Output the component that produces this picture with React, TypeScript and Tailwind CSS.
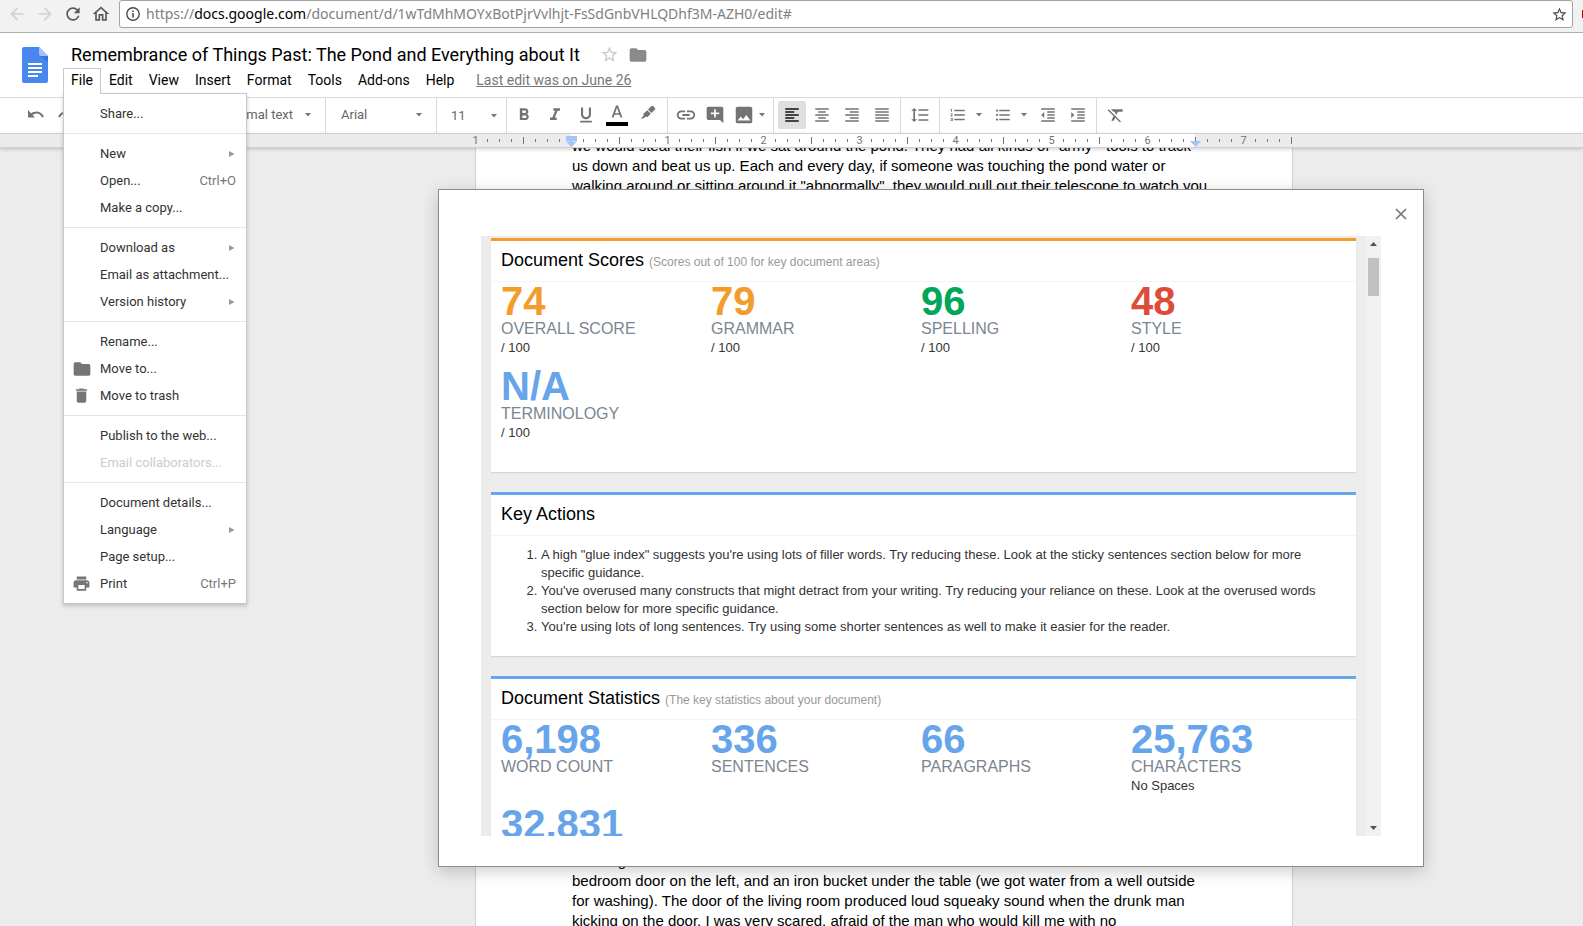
import type { ReactNode } from "react";
import {
  MdAddComment,
  MdArrowBack,
  MdArrowForward,
  MdDelete,
  MdFolder,
  MdFormatAlignCenter,
  MdFormatAlignJustify,
  MdFormatAlignLeft,
  MdFormatAlignRight,
  MdFormatBold,
  MdFormatClear,
  MdFormatIndentDecrease,
  MdFormatIndentIncrease,
  MdFormatItalic,
  MdFormatLineSpacing,
  MdFormatListBulleted,
  MdFormatListNumbered,
  MdFormatUnderlined,
  MdImage,
  MdLink,
  MdOutlineHome,
  MdPrint,
  MdRefresh,
  MdStarBorder,
} from "react-icons/md";

function BrowserBar() {
  return (
    <div className="flex h-[33px] shrink-0 items-start border-b border-[#b0b0b0] bg-[#f2f2f2]">
      <div className="flex h-7 w-[119px] shrink-0 items-center gap-2 pl-[7px] text-[#5a5a5a]">
        <button aria-label="Back" className="text-[#d2d2d2]"><MdArrowBack size={20} /></button>
        <button aria-label="Forward" className="text-[#d2d2d2]"><MdArrowForward size={20} /></button>
        <button aria-label="Reload"><MdRefresh size={20} /></button>
        <button aria-label="Home"><MdOutlineHome size={20} /></button>
      </div>
      <div className="flex h-7 min-w-0 flex-1 items-center rounded-[3px] border border-[#a3a3a3] bg-white pr-1 pl-[6px] font-['Noto_Sans',sans-serif] text-sm leading-5 whitespace-nowrap text-[#808080]">
        <svg width="14" height="14" viewBox="0 0 14 14" className="mr-[6px] shrink-0" fill="none" stroke="#4a4a4a" strokeWidth="1.4">
          <circle cx="7" cy="7" r="6.2" />
          <path d="M7 6v4.4M7 3.4v1.5" strokeWidth="1.6" />
        </svg>
        <span className="flex-1">
          https://<span className="text-black">docs.google.com</span>/document/d/1wTdMhMOYxBotPjrVvlhjt-FsSdGnbVHLQDhf3M-AZH0/edit#
        </span>
        <button aria-label="Bookmark this page" className="text-[#4a4a4a]"><MdStarBorder size={17} /></button>
      </div>
      <div className="flex h-7 w-[10px] shrink-0 items-center justify-end">
        <span className="h-2 w-px bg-[#cc0000]" />
      </div>
    </div>
  );
}

type Item = { label: string; hint?: string; sub?: boolean; off?: boolean; icon?: ReactNode };

const fileMenu: Item[][] = [
  [{ label: "Share..." }],
  [{ label: "New", sub: true }, { label: "Open...", hint: "Ctrl+O" }, { label: "Make a copy..." }],
  [{ label: "Download as", sub: true }, { label: "Email as attachment..." }, { label: "Version history", sub: true }],
  [
    { label: "Rename..." },
    { label: "Move to...", icon: <MdFolder size={20} /> },
    { label: "Move to trash", icon: <MdDelete size={19} /> },
  ],
  [{ label: "Publish to the web..." }, { label: "Email collaborators...", off: true }],
  [
    { label: "Document details..." },
    { label: "Language", sub: true },
    { label: "Page setup..." },
    { label: "Print", hint: "Ctrl+P", icon: <MdPrint size={19} /> },
  ],
];

function FileMenu() {
  return (
    <div role="menu" className="absolute top-6 -left-px w-[184px] border border-[#c6c8ca] bg-white text-[13px] leading-[27px] text-[#333] shadow-[0_2px_4px_rgba(0,0,0,0.2)]">
      {fileMenu.map((group, i) => (
        <div key={i} className={i ? "border-t border-[#e5e5e5] py-[6px]" : "py-[6px]"}>
          {group.map((item) => (
            <button
              key={item.label}
              role="menuitem"
              disabled={item.off}
              className={"flex h-[27px] w-full items-center pr-[10px] text-left whitespace-nowrap " + (item.off ? "text-[#ccc]" : "")}
            >
              <span className="flex w-9 shrink-0 justify-center pr-px text-[#757575]">{item.icon}</span>
              <span className="flex-1">{item.label}</span>
              {item.hint && <span className="text-[#777]">{item.hint}</span>}
              {item.sub && (
                <svg width="8" height="6" viewBox="0 0 8 6" fill="#999"><path d="M1 0l5.500 3L1 6z" /></svg>
              )}
            </button>
          ))}
        </div>
      ))}
    </div>
  );
}

function Header() {
  return (
    <header className="flex h-16 shrink-0 bg-white">
      <svg width="26" height="36" viewBox="0 0 26 36" className="mt-[14px] mr-[15px] ml-[22px] shrink-0">
        <path d="M2 0h15l9 9v25a2 2 0 0 1-2 2H2a2 2 0 0 1-2-2V2a2 2 0 0 1 2-2z" fill="#4a86f0" />
        <path d="M18 9.500L26 15V9z" fill="#3b71d4" />
        <path d="M17 0l9 9h-7a2 2 0 0 1-2-2z" fill="#a4c2f9" />
        <path d="M6 16h14v2H6zM6 20h14v2H6zM6 24h14v2H6zM6 28h10v2H6z" fill="#fff" />
      </svg>
      <div>
        <div className="flex h-[35px] items-center pt-2 pl-2">
          <h1 className="text-lg leading-6 whitespace-nowrap">Remembrance of Things Past: The Pond and Everything about It</h1>
          <button aria-label="Star" className="ml-5 text-[#c8c8c8]"><MdStarBorder size={19} /></button>
          <button aria-label="Move to folder" className="ml-[9px] text-[#8a8a8a]"><MdFolder size={20} /></button>
        </div>
        <nav className="flex h-[26px] text-sm leading-[22px] whitespace-nowrap">
          <div className="relative z-30 border border-b-0 border-[#c6c8ca] bg-white">
            <FileMenu />
            <button className="relative z-10 h-[25px] bg-white px-[7px] pb-[3px]">File</button>
          </div>
          {["Edit", "View", "Insert", "Format", "Tools", "Add-ons", "Help"].map((name) => (
            <button key={name} className="flex h-6 items-center px-2">{name}</button>
          ))}
          <a href="#history" className="ml-[14px] flex h-6 items-center text-[#777] underline">Last edit was on June 26</a>
        </nav>
      </div>
    </header>
  );
}

function Tool({ label, active, children }: { label: string; active?: boolean; children: ReactNode }) {
  return (
    <button aria-label={label} title={label} className={"flex h-7 w-7 shrink-0 items-center justify-center rounded-[2px] " + (active ? "bg-[#dfdfdf] text-[#111]" : "")}>
      {children}
    </button>
  );
}

function Caret() {
  return <svg width="6" height="4" viewBox="0 0 6 4" fill="#777" className="shrink-0"><path d="M0 0h6L3 3.5z" /></svg>;
}

function Toolbar() {
  return (
    <div className="flex h-[37px] shrink-0 items-stretch border-y border-[#d9d9d9] bg-white text-[13px] text-[#666]">
      <div className="flex w-[326px] items-center border-r border-[#d9d9d9] pr-[14px] pb-px pl-[27px]">
        <button aria-label="Undo">
          <svg width="18" height="10" viewBox="0 0 18 10" fill="none" stroke="#737373" strokeWidth="2.2"><path d="M3 5.5C7 1.500 13 1 16 7" /><path d="M1 0v7.500h7z" fill="#737373" stroke="none" /></svg>
        </button>
        <button aria-label="Redo" className="ml-[12px]">
          <svg width="18" height="10" viewBox="0 0 18 10" fill="none" stroke="#737373" strokeWidth="2.200"><path d="M15 5.500C11 1.500 5 1 2 7" /><path d="M17 0v7.500h-7z" fill="#737373" stroke="none" /></svg>
        </button>
        <button className="ml-auto flex items-center gap-3 whitespace-nowrap">Normal text <Caret /></button>
      </div>
      <button className="flex w-[111px] items-center justify-between border-r border-[#d9d9d9] pr-[14px] pb-px pl-[15px]">Arial <Caret /></button>
      <button className="flex w-[70px] items-center justify-between border-r border-[#d9d9d9] pr-[9px] pl-[14px]">11 <Caret /></button>
      <div className="flex w-[161px] items-center gap-[3px] border-r border-[#d9d9d9] pb-px pl-[3px] text-[#737373]">
        <Tool label="Bold"><MdFormatBold size={20} /></Tool>
        <Tool label="Italic"><MdFormatItalic size={20} /></Tool>
        <Tool label="Underline"><MdFormatUnderlined size={20} /></Tool>
        <Tool label="Text color">
          <svg width="22" height="22" viewBox="0 0 22 22">
            <path d="M10 1.500L5.600 13.500h1.900l1-2.700h5l1 2.700h1.900L12 1.500zM9.100 9.200L11 3.800l1.900 5.400z" fill="#737373" />
            <path d="M0 18h22v4H0z" fill="#000" />
          </svg>
        </Tool>
        <Tool label="Highlight color">
          <svg width="16" height="16" viewBox="0 0 16 16" fill="#737373" className="mb-1">
            <path d="M11.200 1.200a1.500 1.500 0 0 1 2.100 0l1.500 1.500a1.500 1.500 0 0 1 0 2.100L11.500 8 8 4.500zM7.300 5.200l3.500 3.500-3.300 3.300-2.200-.3L3.500 13.500H.8l2.700-2.700-.1-2.100z" />
          </svg>
        </Tool>
      </div>
      <div className="flex w-[106px] items-center gap-px border-r border-[#d9d9d9] pb-px pl-1 text-[#737373]">
        <Tool label="Insert link"><MdLink size={22} /></Tool>
        <Tool label="Add comment"><MdAddComment size={20} /></Tool>
        <Tool label="Insert image"><MdImage size={22} /></Tool>
        <Caret />
      </div>
      <div className="flex w-[127px] items-center gap-[2px] border-r border-[#d9d9d9] pb-px pl-1 text-[#737373]">
        <Tool label="Left align" active><MdFormatAlignLeft size={18} /></Tool>
        <Tool label="Center align"><MdFormatAlignCenter size={18} /></Tool>
        <Tool label="Right align"><MdFormatAlignRight size={18} /></Tool>
        <Tool label="Justify"><MdFormatAlignJustify size={18} /></Tool>
      </div>
      <div className="flex w-[39px] items-center border-r border-[#d9d9d9] pb-px pl-[5px] text-[#737373]">
        <Tool label="Line spacing"><MdFormatLineSpacing size={20} /></Tool>
      </div>
      <div className="flex w-[157px] items-center gap-[2px] border-r border-[#d9d9d9] pb-px pl-1 text-[#737373]">
        <Tool label="Numbered list"><MdFormatListNumbered size={18} /></Tool>
        <span className="flex w-[13px] pl-[2px]"><Caret /></span>
        <Tool label="Bulleted list"><MdFormatListBulleted size={18} /></Tool>
        <span className="flex w-[13px] pl-[2px]"><Caret /></span>
        <Tool label="Decrease indent"><MdFormatIndentDecrease size={18} /></Tool>
        <Tool label="Increase indent"><MdFormatIndentIncrease size={18} /></Tool>
      </div>
      <div className="flex items-center pb-px pl-[5px] text-[#737373]">
        <Tool label="Clear formatting"><MdFormatClear size={20} /></Tool>
      </div>
    </div>
  );
}

function Ruler() {
  return (
    <div className="relative z-10 flex h-[14px] shrink-0 border-b border-[#d0d0d0] bg-[#ebebeb] pl-[475px] shadow-[0_1px_4px_rgba(0,0,0,0.2)]">
      <div className="relative flex gap-[11px]">
        <div className="absolute inset-y-0 left-24 w-[624px] bg-white" />
        {Array.from({ length: 69 }, (_, i) => {
          const inch = i / 8 - 1;
          const numbered = i % 8 === 0 && inch !== 0 && i < 68;
          return (
            <div key={i} className="relative flex h-[13px] w-px items-center justify-center">
              {numbered ? (
                <span className="shrink-0 text-[11px] leading-[13px] text-[#757575]">{Math.abs(inch)}</span>
              ) : (
                <span className={i % 4 === 0 ? "h-[7px] w-px bg-[#757575]" : "h-[3px] w-px bg-[#757575]"} />
              )}
            </div>
          );
        })}
        <svg width="12" height="12" viewBox="0 0 12 12" fill="#a3c4f7" className="absolute top-[2px] left-[91px]"><path d="M0 0h11v5H0zM0 5.500h11L5.500 11z" /></svg>
        <svg width="12" height="6" viewBox="0 0 12 6" fill="#a3c4f7" className="absolute top-[7px] left-[715px]"><path d="M0 0h11L5.500 6z" /></svg>
      </div>
    </div>
  );
}

type Stat = { value: string; label: string; note?: string; tone: string };

const scores: Stat[] = [
  { value: "74", label: "OVERALL SCORE", note: "/ 100", tone: "text-[#f39c2b]" },
  { value: "79", label: "GRAMMAR", note: "/ 100", tone: "text-[#f39c2b]" },
  { value: "96", label: "SPELLING", note: "/ 100", tone: "text-[#00a65a]" },
  { value: "48", label: "STYLE", note: "/ 100", tone: "text-[#dd4b39]" },
  { value: "N/A", label: "TERMINOLOGY", note: "/ 100", tone: "text-[#67a5ea]" },
];

const statistics: Stat[] = [
  { value: "6,198", label: "WORD COUNT", tone: "text-[#67a5ea]" },
  { value: "336", label: "SENTENCES", tone: "text-[#67a5ea]" },
  { value: "66", label: "PARAGRAPHS", tone: "text-[#67a5ea]" },
  { value: "25,763", label: "CHARACTERS", note: "No Spaces", tone: "text-[#67a5ea]" },
  { value: "32,831", label: "CHARACTERS", note: "With Spaces", tone: "text-[#67a5ea]" },
];

function Stats({ items }: { items: Stat[] }) {
  return (
    <div className="grid grid-cols-4 pt-[3px] pr-[15px] pb-[17px] pl-[10px]">
      {items.map((s) => (
        <div key={s.value} className="h-[85px]">
          <div className={"text-[40px] leading-8 font-bold " + s.tone}>{s.value}</div>
          <div className="text-base leading-6 text-[#7b8691]">{s.label}</div>
          <div className="text-[13px] leading-[14px]">{s.note}</div>
        </div>
      ))}
    </div>
  );
}

function Card({ title, note, accent, children }: { title: string; note?: string; accent: string; children: ReactNode }) {
  return (
    <section className={"mb-5 border-t-[3px] bg-white shadow-[0_1px_1px_rgba(0,0,0,0.1)] " + accent}>
      <header className="flex h-[41px] items-baseline gap-[5px] border-b border-[#f4f4f4] px-[10px] pt-[7px]">
        <h2 className="text-lg leading-6 text-black">{title}</h2>
        {note && <small className="text-[12px] leading-4 text-[#999]">{note}</small>}
      </header>
      {children}
    </section>
  );
}

function ReportDialog() {
  return (
    <div className="pointer-events-none absolute inset-0 z-20 flex items-start pt-[41px] pl-[438px]">
      <div role="dialog" aria-label="Document report" className="pointer-events-auto relative w-[986px] border border-[#8c8c8c] bg-white px-[42px] pt-[46px] pb-[30px] shadow-[0_4px_16px_rgba(0,0,0,0.2)]">
        <button aria-label="Close" className="absolute top-[18px] right-4">
          <svg width="12" height="12" viewBox="0 0 12 12" stroke="#777" strokeWidth="1.700"><path d="M1 1l10 10M11 1L1 11" /></svg>
        </button>
        <div className="flex h-[600px] overflow-hidden bg-[#ececec] font-['Liberation_Sans',Arial,sans-serif] text-[#333]">
          <div className="min-w-0 flex-1 px-[10px] pt-[2px]">
            <Card title="Document Scores" note="(Scores out of 100 for key document areas)" accent="border-t-[#f39c2b]">
              <Stats items={scores} />
            </Card>
            <Card title="Key Actions" accent="border-t-[#67a5ea]">
              <ol className="list-decimal pt-[10px] pr-[10px] pb-5 pl-[50px] text-[13px] leading-[18px]">
                <li>A high "glue index" suggests you're using lots of filler words. Try reducing these. Look at the sticky sentences section below for more specific guidance.</li>
                <li>You've overused many constructs that might detract from your writing. Try reducing your reliance on these. Look at the overused words section below for more specific guidance.</li>
                <li>You're using lots of long sentences. Try using some shorter sentences as well to make it easier for the reader.</li>
              </ol>
            </Card>
            <Card title="Document Statistics" note="(The key statistics about your document)" accent="border-t-[#67a5ea]">
              <Stats items={statistics} />
            </Card>
          </div>
          <div className="flex w-[15px] shrink-0 flex-col items-center bg-[#f1f1f1] py-[6px]">
            <svg width="7" height="4" viewBox="0 0 7 4" fill="#505050"><path d="M0 4h7L3.500 0z" /></svg>
            <div className="mt-3 h-[38px] w-[11px] bg-[#c1c1c1]" />
            <svg width="7" height="4" viewBox="0 0 7 4" fill="#505050" className="mt-auto"><path d="M0 0h7L3.500 4z" /></svg>
          </div>
        </div>
      </div>
    </div>
  );
}

function DocumentArea() {
  return (
    <main className="relative flex-1 overflow-hidden bg-[#ececec] pl-[475px]">
      <article className="flex h-full w-[818px] flex-col justify-between border-x border-[#d0d0d0] bg-white px-24 font-['Liberation_Sans',Arial,sans-serif] text-[15px] leading-5 whitespace-nowrap text-black">
        <p className="-mt-3">
          we would steal their fish if we sat around the pond. They had all kinds of "army"&nbsp; tools to track<br />
          us down and beat us up. Each and every day, if someone was touching the pond water or<br />
          walking around or sitting around it "abnormally", they would pull out their telescope to watch you
        </p>
        <p className="-mb-[5px]">
          morning<br />
          bedroom door on the left, and an iron bucket under the table (we got water from a well outside<br />
          for washing). The door of the living room produced loud squeaky sound when the drunk man<br />
          kicking on the door. I was very scared, afraid of the man who would kill me with no
        </p>
      </article>
      <ReportDialog />
    </main>
  );
}

export default function App() {
  return (
    <div className="flex h-screen flex-col overflow-hidden bg-white font-[Roboto,sans-serif] text-black">
      <BrowserBar />
      <Header />
      <Toolbar />
      <Ruler />
      <DocumentArea />
    </div>
  );
}
